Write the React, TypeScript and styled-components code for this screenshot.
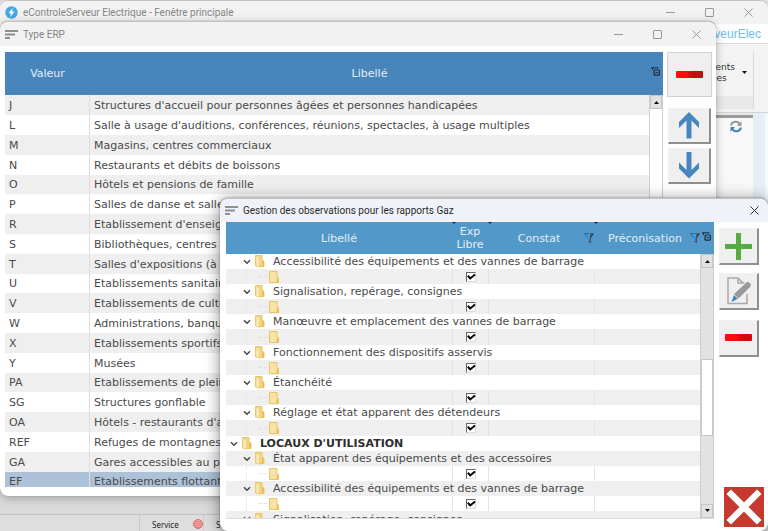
import React from "react";
import styled, { createGlobalStyle, css } from "styled-components";

const GlobalStyle = createGlobalStyle`
  *, *::before, *::after { box-sizing: border-box; }
  html, body, #root { height: 100%; margin: 0; }
  body { overflow: hidden; background: #dcdcdc; font-family: "DejaVu Sans", Verdana, sans-serif; font-size: 11px; color: #4a4a4a; }
  button { font: inherit; color: inherit; padding: 0; margin: 0; border: 0; background: none; }
`;

const titleFont = css`
  font-family: Roboto, "Segoe UI", sans-serif;
`;

const Desktop = styled.main`
  position: relative;
  height: 100vh;
  overflow: hidden;
`;

const MainWindow = styled.section`
  display: flex;
  flex-direction: column;
  height: 100%;
  border-top: 1px solid #c4c4c4;
  border-radius: 8px 8px 0 0;
  background: #e6e6e6;
`;

const FloatingWindow = styled.section<{ $front?: boolean }>`
  position: absolute;
  display: flex;
  flex-direction: column;
  overflow: hidden;
  background: #fff;
  border-top: 1px solid #c2c2c2;
  ${(p) =>
    p.$front
      ? css`
          inset: 198px 0 0 220px;
          border-radius: 8px;
          box-shadow: 0 2px 16px rgba(0, 0, 0, 0.45), 0 0 2px rgba(0, 0, 0, 0.4);
        `
      : css`
          inset: 21px 52px 35px 0;
          border-radius: 8px;
          box-shadow: 0 2px 10px rgba(0, 0, 0, 0.28), 0 0 1px rgba(0, 0, 0, 0.4);
        `}
`;

const TitleBar = styled.header<{ $active?: boolean; $tall?: boolean }>`
  ${titleFont}
  flex: none;
  display: flex;
  align-items: center;
  gap: 5px;
  height: ${(p) => (p.$tall ? 23 : 24)}px;
  padding-left: 5px;
  font-size: 10px;
  color: ${(p) => (p.$active ? "#2b2b2b" : "#858585")};
  background: ${(p) => (p.$active ? "#eff3f9" : "#f2f2f2")};
  border-radius: 8px 8px 0 0;
`;

const Title = styled.h1`
  flex: 1;
  margin: 0;
  font: inherit;
  white-space: nowrap;
`;

const Controls = styled.div<{ $gap: number; $edge: number }>`
  display: flex;
  gap: ${(p) => p.$gap}px;
  padding-right: ${(p) => p.$edge}px;
`;

const ControlButton = styled.button`
  display: grid;
  place-items: center;
  width: 11px;
  height: 16px;
`;

const Brand = styled.div`
  flex: none;
  height: 20px;
  padding-right: 7px;
  background: #fff;
  border-bottom: 1px solid #dadada;
  text-align: right;
  font: 12px/20px "Liberation Sans", Arial, sans-serif;
  color: #6ebdee;
`;

const Ribbon = styled.div`
  flex: none;
  display: flex;
  justify-content: flex-end;
  height: 69px;
  padding: 7px 14px 3px 0;
  background: #f3f3f3;
  border-bottom: 1px solid #d4d4d4;
`;

const RibbonGroup = styled.div`
  display: flex;
  flex-direction: column;
  width: 92px;
  border-right: 1px solid #dadada;
`;

const RibbonMenu = styled.button`
  flex: 1;
  display: flex;
  align-items: flex-start;
  justify-content: flex-end;
  gap: 7px;
  padding: 11px 6px 0 0;
  font-size: 9px;
  line-height: 11px;
  color: #333;
  text-align: left;
  svg { margin-top: 9px; }
`;

const RibbonFooter = styled.div`
  height: 13px;
  background: #e9e9e9;
`;

const Workspace = styled.div`
  flex: 1;
  display: flex;
  justify-content: flex-end;
  background: linear-gradient(#e8e8e8, #dadada);
`;

const SidePanel = styled.div`
  width: 80px;
  margin-top: 2px;
  padding: 2px 11px 0 0;
  border-top: 3px solid #9b9b9b;
  background: #f8f8f8;
  text-align: right;
`;

const SideStrip = styled.div`
  width: 15px;
  background: #e6eff8;
  border-right: 3px solid #f8f8f8;
`;

const StatusBar = styled.footer`
  flex: none;
  display: flex;
  height: 17px;
  border-top: 1px solid #c4c4c4;
  background: #dedede;
  font: 8px/19px "Noto Sans", Tahoma, sans-serif;
  color: #222;
`;

const StatusCell = styled.div<{ $w: number }>`
  display: flex;
  align-items: center;
  justify-content: space-between;
  width: ${(p) => p.$w}px;
  padding: 2px 0 0 12px;
  border-right: 1px solid #cacaca;
`;

const Lamp = styled.span`
  width: 10px;
  height: 10px;
  border-radius: 50%;
  background: repeating-linear-gradient(#f2a5a0 0 1px, #e8827d 1px 2px);
  border: 1px solid #dc6a66;
`;

const WindowBody = styled.div<{ $pad: string; $gap: number }>`
  flex: 1;
  min-height: 0;
  display: flex;
  gap: ${(p) => p.$gap}px;
  padding: ${(p) => p.$pad};
`;

const Grid = styled.div<{ $line?: boolean }>`
  position: relative;
  flex: 1;
  min-width: 0;
  overflow: hidden;
  ${(p) =>
    p.$line &&
    css`
      margin-bottom: 8px;
      border-bottom: 1px solid #dcdcdc;
    `}
`;

const Table = styled.table`
  width: 100%;
  table-layout: fixed;
  border-collapse: separate;
  border-spacing: 0;
  font-size: 11px;
  white-space: nowrap;
`;

const HeadCell = styled.th<{ $h: number; $bg: string }>`
  position: relative;
  height: ${(p) => p.$h}px;
  padding: 0;
  background: ${(p) => p.$bg};
  color: #e3eef8;
  font-weight: 400;
  line-height: 13px;
  text-align: center;
`;

const HeadInner = styled.div`
  display: flex;
  align-items: center;
  padding-left: 6px;
  span { flex: 1; }
`;

const HeadTool = styled.button`
  display: block;
  margin-left: 2px;
  padding-bottom: 4px;
  svg { display: block; }
`;

const HeadMark = styled.i`
  position: absolute;
  top: 0;
  left: 0;
  border: 2px solid transparent;
  border-top-color: #1d2b38;
  border-bottom: 0;
`;

const ListRow = styled.tr<{ $selected?: boolean }>`
  background: #fff;
  &:nth-child(odd) { background: #efefef; }
  td { height: 20px; padding: 0 4px; line-height: 19px; overflow: hidden; }
  &:nth-child(5n) td { height: 19px; }
  td:first-child { border-right: 1px solid #dedede; }
  ${(p) => p.$selected && css`&&& { background: #adc1d8; }`}
`;

const TreeRow = styled.tr<{ $split?: boolean }>`
  background: #fff;
  &:nth-child(even) { background: #efefef; }
  td { height: 15px; padding: 0; line-height: 15px; }
  &:nth-child(6n) td { height: 16px; }
  ${(p) => p.$split && css`td + td { border-left: 1px solid #e3e3e3; }`}
`;

const TreeCell = styled.div<{ $depth: number }>`
  display: flex;
  align-items: center;
  height: 15px;
  padding-left: ${(p) => 3 + p.$depth * 13}px;
  font-weight: ${(p) => (p.$depth === 0 ? 700 : 400)};
  color: ${(p) => (p.$depth === 0 ? "#2e2e2e" : "#4a4a4a")};
`;

const Twisty = styled.button`
  display: grid;
  place-items: center;
  width: 9px;
  height: 9px;
  margin-right: 4px;
`;

const TreeLabel = styled.span`
  margin-left: 8px;
`;

const Branch = styled.div`
  display: flex;
  align-items: center;
  height: 15px;
  margin-left: 20px;
  border-left: 1px dotted #e2e2e2;
  padding-left: 12px;
  gap: 2px;
  &::before { content: ""; width: 8px; border-top: 1px dotted #dadada; }
`;

const Check = styled.label`
  display: grid;
  justify-content: center;
  align-items: center;
  height: 15px;
  > * { grid-area: 1 / 1; }
  input {
    appearance: none;
    width: 10px;
    height: 10px;
    margin: 0;
    background: #fff;
    border: 1px solid #dcdcdc;
    border-top-color: #666;
    border-left-color: #666;
  }
  svg { pointer-events: none; margin-left: 1px; }
  input:not(:checked) + svg { visibility: hidden; }
`;

const ScrollBar = styled.div<{ $top: number; $plain?: boolean }>`
  position: absolute;
  inset: ${(p) => p.$top}px 0 0 auto;
  display: flex;
  flex-direction: column;
  width: 14px;
  border-right: 1px solid #cfcfcf;
  border-left: 1px solid #cfcfcf;
  background: ${(p) =>
    p.$plain ? "#fff" : "repeating-conic-gradient(#dedede 0 25%, #e6e6e6 0 50%) 0 0 / 2px 2px"};
`;

const ScrollButton = styled.button`
  display: grid;
  place-items: center;
  flex: none;
  height: 14px;
  background: #e2e2e2;
  border: 1px solid #c6c6c6;
`;

const ScrollTrack = styled.div<{ $grow: number }>`
  flex: ${(p) => p.$grow};
`;

const Thumb = styled.div`
  flex: 76;
  background: #fff;
  border: 1px solid #c6c6c6;
`;

const Actions = styled.div`
  flex: none;
  display: flex;
  flex-direction: column;
  align-items: center;
  width: 45px;
`;

const ActionStack = styled.div`
  align-self: flex-start;
  display: flex;
  flex-direction: column;
  padding-top: 6px;
`;

const ActionButton = styled.button<{ $w: number; $h: number; $gap?: number; $flat?: boolean }>`
  display: grid;
  place-items: center;
  flex: none;
  width: ${(p) => p.$w}px;
  height: ${(p) => p.$h}px;
  margin-bottom: ${(p) => p.$gap ?? 0}px;
  background: #efefef;
  border: 1px solid #d2d2d2;
  ${(p) =>
    !p.$flat &&
    css`
      border-top-color: #f2f2f2;
      border-left-color: #f2f2f2;
      border-right: 2px solid #8f8f8f;
      border-bottom: 2px solid #8f8f8f;
    `}
`;

const CloseAction = styled.button`
  display: grid;
  place-items: center;
  width: 40px;
  height: 40px;
  margin: auto 0 0 5px;
  background: #c43a2e;
`;

const Lines = () => (
  <svg width="13" height="9" viewBox="0 0 13 9" fill="none" stroke="#8e8e8e" strokeWidth="2">
    <path d="M0 1h13M0 4.5h10M0 8h5" />
  </svg>
);

const Bolt = () => (
  <svg width="13" height="13" viewBox="0 0 13 13">
    <circle cx="6.5" cy="6.5" r="6.2" fill="#45a8e2" />
    <path d="M7.6 2 3.5 7.3h2.4L5.3 11l4.2-5.4H7.1z" fill="#fff" />
  </svg>
);

const Minimise = () => (
  <svg width="9" height="9" viewBox="0 0 9 9" stroke="#999"><path d="M0 4.5h9" /></svg>
);
const Maximise = () => (
  <svg width="9" height="9" viewBox="0 0 9 9" stroke="#999" fill="none"><rect x=".5" y=".5" width="8" height="8" rx=".5" /></svg>
);
const Cross = ({ color = "#999" }: { color?: string }) => (
  <svg width="9" height="9" viewBox="0 0 9 9" stroke={color} fill="none"><path d="m.5.5 8 8m0-8-8 8" /></svg>
);

const Caret = ({ up }: { up?: boolean }) => (
  <svg width="5" height="3" viewBox="0 0 5 3"><path d={up ? "M0 3 2.5 0 5 3z" : "M0 0h5L2.5 3z"} fill="#111" /></svg>
);

const Chevron = () => (
  <svg width="8" height="6" viewBox="0 0 8 6" fill="none" stroke="#444" strokeWidth="1.4"><path d="m1 1.2 3 3 3-3" /></svg>
);

const OpenFolder = () => (
  <svg width="10" height="13" viewBox="0 0 10 13">
    <path d="M.5.5h6.5v5l2 1v5H5L.5 11z" fill="#f2d68c" stroke="#e9c564" />
    <path d="m.8.8 3.7 2V12.5L.8 11z" fill="#f9e8b8" stroke="#ecc96e" strokeWidth=".7" />
    <path d="M7 5.5h2v6H7z" fill="#e9c055" />
  </svg>
);

const Folder = () => (
  <svg width="10" height="12" viewBox="0 0 10 12">
    <path d="M.5.5H8v6h1.5v5h-9z" fill="#f7e2a8" stroke="#e9c564" />
    <path d="M7.5 7.5h2v4h-2z" fill="#e9c055" />
  </svg>
);

const Tick = () => (
  <svg width="9" height="8" viewBox="0 0 9 8" fill="none" stroke="#000" strokeWidth="2"><path d="m.8 2.8 2.4 2.6L8 1.4" /></svg>
);

const Popout = () => (
  <svg width="9" height="9" viewBox="0 0 9 9" fill="none" stroke="#1d2b38">
    <path d="M0 .8h7.5M1.5 1v2" />
    <rect x="3" y="3" width="5.4" height="5.2" rx="1" strokeWidth="1.2" />
    <path d="M4.5 5.6H7" />
  </svg>
);

const Funnel = () => (
  <svg width="10" height="10" viewBox="0 0 10 10">
    <path d="M0 .5h10L6.8 5v5L4 8.5V5z" fill="#26313c" />
    <path d="M1 .8h6L5.8 4.5V9L4 8V5z" fill="#2f9cf0" />
    <path d="M7.4 1 6.2 4.5V9" stroke="#8b5e45" strokeWidth=".7" fill="none" />
  </svg>
);

const RedBar = () => (
  <svg width="27" height="8" viewBox="0 0 27 8">
    <defs><linearGradient id="redbar"><stop offset=".45" stopColor="#f7100b" /><stop offset=".7" stopColor="#c80e0c" /></linearGradient></defs>
    <rect width="27" height="7" rx="1" fill="url(#redbar)" />
    <path d="M12 1.5h5M13 3.5h7M12 5.5h6" stroke="#a30a08" strokeDasharray="1 1" />
  </svg>
);

const Arrow = ({ down }: { down?: boolean }) => (
  <svg width="22" height="27" viewBox="0 0 22 27">
    <path d={down ? "M8.5 0h5v18l7.5-7.5v6L11 26.5 1 16.5v-6L8.5 18z" : "M8.5 26.5h5v-18L21 16v-6L11 0 1 10v6l7.5-7.5z"} fill="#4685bd" />
  </svg>
);

const Plus = () => (
  <svg width="27" height="27" viewBox="0 0 27 27"><path d="M11 0h5v11h11v5H16v11h-5V16H0v-5h11z" fill="#58ab42" /></svg>
);

const Edit = () => (
  <svg width="24" height="28" viewBox="0 0 24 28">
    <path d="M11 1H1v25.5h19V17M11 1v5h6.5M11 1l5 5" fill="none" stroke="#aaa" strokeWidth="1.5" />
    <path d="M18.5 6.5q2-2.5 4.2-.7 2 2 .3 4.2L11.5 21.5l-4.5-4.5z" fill="#999" />
    <path d="m7 18 3.8 3.8L4.5 25z" fill="#4385c0" />
  </svg>
);

const BigCross = () => (
  <svg width="36" height="36" viewBox="0 0 36 36"><path d="m5 5 26 26m0-26-26 26" stroke="#fff" strokeWidth="6.5" strokeLinecap="square" fill="none" /></svg>
);

const Refresh = () => (
  <svg width="12" height="13" viewBox="0 0 12 13" fill="none" strokeWidth="2">
    <path d="M1 5.5C2 .8 8 .8 9.5 4" stroke="#999" /><path d="M11.5 1v5H7z" fill="#999" />
    <path d="M11 7.5C10 12.2 4 12.2 2.5 9" stroke="#4685bd" /><path d="M.5 12V7H5z" fill="#4685bd" />
  </svg>
);

const SystemButtons = () => (
  <Controls $gap={28} $edge={14}>
    <ControlButton aria-label="Réduire"><Minimise /></ControlButton>
    <ControlButton aria-label="Agrandir"><Maximise /></ControlButton>
    <ControlButton aria-label="Fermer"><Cross /></ControlButton>
  </Controls>
);

const types: [string, string][] = [
  ["J", "Structures d'accueil pour personnes âgées et personnes handicapées"],
  ["L", "Salle à usage d'auditions, conférences, réunions, spectacles, à usage multiples"],
  ["M", "Magasins, centres commerciaux"],
  ["N", "Restaurants et débits de boissons"],
  ["O", "Hôtels et pensions de famille"],
  ["P", "Salles de danse et salles de jeux"],
  ["R", "Etablissement d'enseignement"],
  ["S", "Bibliothèques, centres de documentation"],
  ["T", "Salles d'expositions (à vocation commerciale)"],
  ["U", "Etablissements sanitaires"],
  ["V", "Etablissements de culte"],
  ["W", "Administrations, banques, bureaux"],
  ["X", "Etablissements sportifs couverts"],
  ["Y", "Musées"],
  ["PA", "Etablissements de plein air"],
  ["SG", "Structures gonflable"],
  ["OA", "Hôtels - restaurants d'altitude"],
  ["REF", "Refuges de montagnes"],
  ["GA", "Gares accessibles au public"],
  ["EF", "Etablissements flottants"],
];

type Node = { depth: number; label?: string };
const leaf: Node = { depth: 2 };
const tree: Node[] = [
  { depth: 1, label: "Accessibilité des équipements et des vannes de barrage" }, leaf,
  { depth: 1, label: "Signalisation, repérage, consignes" }, leaf,
  { depth: 1, label: "Manœuvre et emplacement des vannes de barrage" }, leaf,
  { depth: 1, label: "Fonctionnement des dispositifs asservis" }, leaf,
  { depth: 1, label: "Étanchéité" }, leaf,
  { depth: 1, label: "Réglage et état apparent des détendeurs" }, leaf,
  { depth: 0, label: "LOCAUX D'UTILISATION" },
  { depth: 1, label: "État apparent des équipements et des accessoires" }, leaf,
  { depth: 1, label: "Accessibilité des équipements et des vannes de barrage" }, leaf,
  { depth: 1, label: "Signalisation, repérage, consignes" },
];

const TypeWindow = () => (
  <FloatingWindow aria-label="Type ERP">
    <TitleBar><Lines /><Title>Type ERP</Title><SystemButtons /></TitleBar>
    <WindowBody $pad="6px 4px 9px 5px" $gap={4}>
      <Grid>
        <Table>
          <colgroup><col width="85" /><col /><col width="14" /></colgroup>
          <thead>
            <tr>
              <HeadCell $h={43} $bg="#4885bb">Valeur</HeadCell>
              <HeadCell $h={43} $bg="#4885bb">Libellé</HeadCell>
              <HeadCell $h={43} $bg="#4885bb"><HeadTool aria-label="Options"><Popout /></HeadTool></HeadCell>
            </tr>
          </thead>
          <tbody>
            {types.map(([code, label]) => (
              <ListRow key={code} $selected={code === "EF"}><td>{code}</td><td colSpan={2}>{label}</td></ListRow>
            ))}
          </tbody>
        </Table>
        <ScrollBar $top={43} $plain><ScrollButton aria-label="Défiler vers le haut"><Caret up /></ScrollButton></ScrollBar>
      </Grid>
      <Actions>
        <ActionButton $w={45} $h={45} $gap={11} $flat aria-label="Supprimer"><RedBar /></ActionButton>
        <ActionButton $w={43} $h={36} $gap={4} aria-label="Monter"><Arrow /></ActionButton>
        <ActionButton $w={43} $h={36} aria-label="Descendre"><Arrow down /></ActionButton>
      </Actions>
    </WindowBody>
  </FloatingWindow>
);

const headBlue = "#5299c9";

const ObservationsWindow = () => (
  <FloatingWindow $front aria-label="Gestion des observations">
    <TitleBar $active $tall>
      <Lines /><Title>Gestion des observations pour les rapports Gaz</Title>
      <Controls $gap={0} $edge={8}><ControlButton aria-label="Fermer"><Cross color="#333" /></ControlButton></Controls>
    </TitleBar>
    <WindowBody $pad="0 4px 4px 6px" $gap={5}>
      <Grid $line>
        <Table>
          <colgroup><col /><col width="36" /><col width="106" /><col width="106" /><col width="14" /></colgroup>
          <thead>
            <tr>
              <HeadCell $h={32} $bg={headBlue}>Libellé</HeadCell>
              <HeadCell $h={32} $bg={headBlue}><HeadMark />Exp<br />Libre</HeadCell>
              <HeadCell $h={32} $bg={headBlue}><HeadMark /><HeadInner><span>Constat</span><Funnel /></HeadInner></HeadCell>
              <HeadCell $h={32} $bg={headBlue}><HeadMark /><HeadInner><span>Préconisation</span><Funnel /></HeadInner></HeadCell>
              <HeadCell $h={32} $bg={headBlue}><HeadTool aria-label="Options"><Popout /></HeadTool></HeadCell>
            </tr>
          </thead>
          <tbody>
            {tree.map((node, i) =>
              node.label ? (
                <TreeRow key={i}>
                  <td colSpan={5}>
                    <TreeCell $depth={node.depth}>
                      <Twisty aria-label="Replier"><Chevron /></Twisty>
                      <OpenFolder />
                      <TreeLabel>{node.label}</TreeLabel>
                    </TreeCell>
                  </td>
                </TreeRow>
              ) : (
                <TreeRow key={i} $split>
                  <td><Branch><Folder /></Branch></td>
                  <td><Check><input type="checkbox" defaultChecked aria-label="Expression libre" /><Tick /></Check></td>
                  <td /><td colSpan={2} />
                </TreeRow>
              )
            )}
          </tbody>
        </Table>
        <ScrollBar $top={32}>
          <ScrollButton aria-label="Défiler vers le haut"><Caret up /></ScrollButton>
          <ScrollTrack $grow={92} /><Thumb /><ScrollTrack $grow={69} />
          <ScrollButton aria-label="Défiler vers le bas"><Caret /></ScrollButton>
        </ScrollBar>
      </Grid>
      <Actions>
        <ActionStack>
          <ActionButton $w={40} $h={37} $gap={8} aria-label="Ajouter"><Plus /></ActionButton>
          <ActionButton $w={40} $h={37} $gap={10} aria-label="Modifier"><Edit /></ActionButton>
          <ActionButton $w={40} $h={37} aria-label="Supprimer"><RedBar /></ActionButton>
        </ActionStack>
        <CloseAction aria-label="Quitter"><BigCross /></CloseAction>
      </Actions>
    </WindowBody>
  </FloatingWindow>
);

export default function App() {
  return (
    <Desktop>
      <GlobalStyle />
      <MainWindow>
        <TitleBar $tall><Bolt /><Title>eControleServeur Electrique - Fenêtre principale</Title><SystemButtons /></TitleBar>
        <Brand>eControleServeurElec</Brand>
        <Ribbon>
          <RibbonGroup>
            <RibbonMenu>Documents<br />annexées<Caret /></RibbonMenu>
            <RibbonFooter />
          </RibbonGroup>
        </Ribbon>
        <Workspace><SidePanel><Refresh /></SidePanel><SideStrip /></Workspace>
        <StatusBar>
          <StatusCell $w={140} />
          <StatusCell $w={64}>Service<Lamp /></StatusCell>
          <StatusCell $w={64}>Serveur</StatusCell>
        </StatusBar>
      </MainWindow>
      <TypeWindow />
      <ObservationsWindow />
    </Desktop>
  );
}
